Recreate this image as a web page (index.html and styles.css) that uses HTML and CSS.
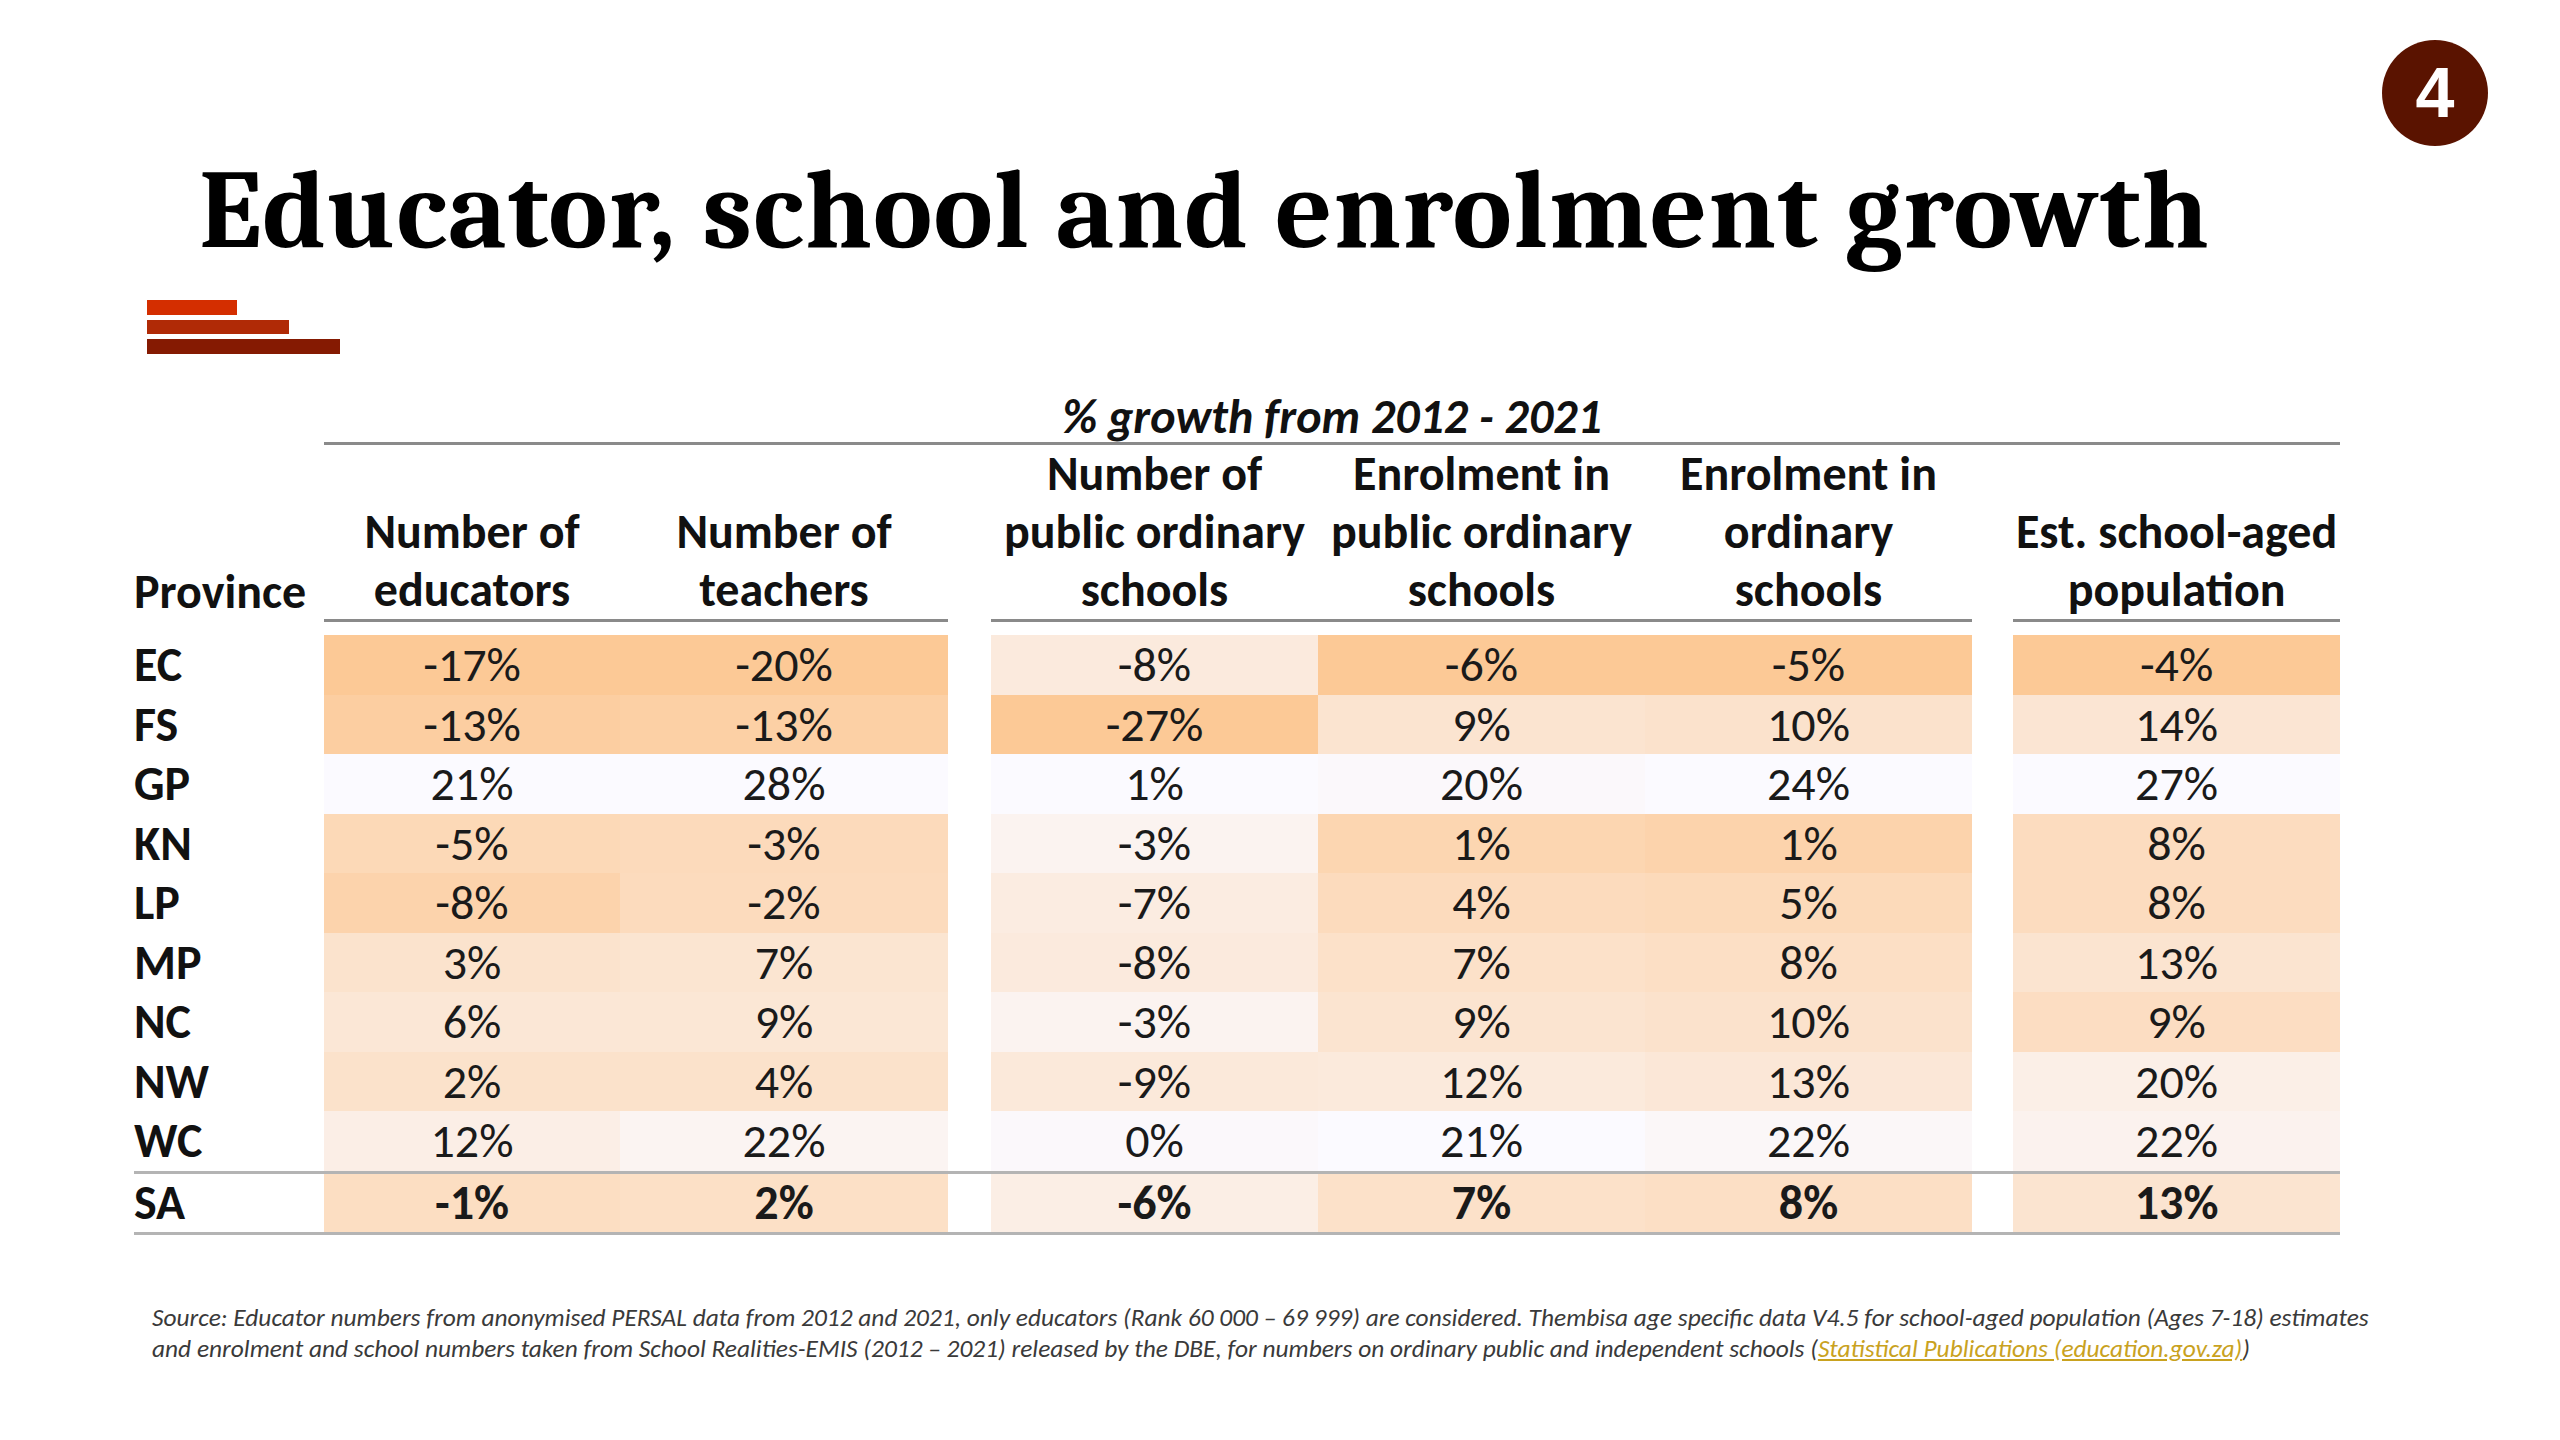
FILE: index.html
```html
<!DOCTYPE html>
<html lang="en">
<head>
<meta charset="utf-8">
<title>Educator, school and enrolment growth</title>
<link rel="stylesheet" href="styles.css">
</head>
<body>
<div class="slide">
  <div class="badge">4</div>
  <h1 class="title">Educator, school and enrolment growth</h1>
  <div class="bars">
    <div class="bar bar1"></div>
    <div class="bar bar2"></div>
    <div class="bar bar3"></div>
  </div>
  <table class="growth">
    <colgroup>
      <col class="c-prov"><col class="c-a1"><col class="c-a2"><col class="c-gap1"><col class="c-b"><col class="c-b"><col class="c-b"><col class="c-gap2"><col class="c-b">
    </colgroup>
    <thead>
      <tr class="cap-row">
        <th></th>
        <th colspan="8" class="caption">% growth from 2012 - 2021</th>
      </tr>
      <tr class="head-row">
        <th class="prov">Province</th>
        <th class="h">Number of<br>educators</th>
        <th class="h">Number of<br>teachers</th>
        <th class="gap"></th>
        <th class="h">Number of<br>public ordinary<br>schools</th>
        <th class="h">Enrolment in<br>public ordinary<br>schools</th>
        <th class="h">Enrolment in<br>ordinary<br>schools</th>
        <th class="gap"></th>
        <th class="h">Est. school-aged<br>population</th>
      </tr>
      <tr class="spacer"><td colspan="9"></td></tr>
    </thead>
    <tbody>
      <tr>
        <th class="prov">EC</th>
        <td style="background:rgb(252,201,150)">-17%</td>
        <td style="background:rgb(252,201,150)">-20%</td>
        <td class="gap"></td>
        <td style="background:rgb(251,234,221)">-8%</td>
        <td style="background:rgb(252,201,150)">-6%</td>
        <td style="background:rgb(252,201,150)">-5%</td>
        <td class="gap"></td>
        <td style="background:rgb(252,201,150)">-4%</td>
      </tr>
      <tr>
        <th class="prov">FS</th>
        <td style="background:rgb(252,206,161)">-13%</td>
        <td style="background:rgb(252,208,165)">-13%</td>
        <td class="gap"></td>
        <td style="background:rgb(252,201,150)">-27%</td>
        <td style="background:rgb(251,228,208)">9%</td>
        <td style="background:rgb(251,226,204)">10%</td>
        <td class="gap"></td>
        <td style="background:rgb(251,229,211)">14%</td>
      </tr>
      <tr>
        <th class="prov">GP</th>
        <td style="background:rgb(251,250,255)">21%</td>
        <td style="background:rgb(251,250,255)">28%</td>
        <td class="gap"></td>
        <td style="background:rgb(251,250,255)">1%</td>
        <td style="background:rgb(251,248,251)">20%</td>
        <td style="background:rgb(251,250,255)">24%</td>
        <td class="gap"></td>
        <td style="background:rgb(251,250,255)">27%</td>
      </tr>
      <tr>
        <th class="prov">KN</th>
        <td style="background:rgb(252,217,183)">-5%</td>
        <td style="background:rgb(252,218,187)">-3%</td>
        <td class="gap"></td>
        <td style="background:rgb(251,243,240)">-3%</td>
        <td style="background:rgb(252,214,177)">1%</td>
        <td style="background:rgb(252,211,172)">1%</td>
        <td class="gap"></td>
        <td style="background:rgb(252,220,191)">8%</td>
      </tr>
      <tr>
        <th class="prov">LP</th>
        <td style="background:rgb(252,211,172)">-8%</td>
        <td style="background:rgb(252,219,189)">-2%</td>
        <td class="gap"></td>
        <td style="background:rgb(251,236,225)">-7%</td>
        <td style="background:rgb(252,219,189)">4%</td>
        <td style="background:rgb(252,218,186)">5%</td>
        <td class="gap"></td>
        <td style="background:rgb(252,220,191)">8%</td>
      </tr>
      <tr>
        <th class="prov">MP</th>
        <td style="background:rgb(251,227,205)">3%</td>
        <td style="background:rgb(251,229,209)">7%</td>
        <td class="gap"></td>
        <td style="background:rgb(251,234,221)">-8%</td>
        <td style="background:rgb(252,225,201)">7%</td>
        <td style="background:rgb(252,223,197)">8%</td>
        <td class="gap"></td>
        <td style="background:rgb(251,228,208)">13%</td>
      </tr>
      <tr>
        <th class="prov">NC</th>
        <td style="background:rgb(251,231,214)">6%</td>
        <td style="background:rgb(251,231,213)">9%</td>
        <td class="gap"></td>
        <td style="background:rgb(251,243,240)">-3%</td>
        <td style="background:rgb(251,228,208)">9%</td>
        <td style="background:rgb(251,226,204)">10%</td>
        <td class="gap"></td>
        <td style="background:rgb(252,221,194)">9%</td>
      </tr>
      <tr>
        <th class="prov">NW</th>
        <td style="background:rgb(251,226,203)">2%</td>
        <td style="background:rgb(251,226,203)">4%</td>
        <td class="gap"></td>
        <td style="background:rgb(251,233,218)">-9%</td>
        <td style="background:rgb(251,234,220)">12%</td>
        <td style="background:rgb(251,231,215)">13%</td>
        <td class="gap"></td>
        <td style="background:rgb(251,239,231)">20%</td>
      </tr>
      <tr>
        <th class="prov">WC</th>
        <td style="background:rgb(251,238,230)">12%</td>
        <td style="background:rgb(251,244,242)">22%</td>
        <td class="gap"></td>
        <td style="background:rgb(251,248,251)">0%</td>
        <td style="background:rgb(251,250,255)">21%</td>
        <td style="background:rgb(251,247,248)">22%</td>
        <td class="gap"></td>
        <td style="background:rgb(251,242,238)">22%</td>
      </tr>
      <tr class="total">
        <th class="prov">SA</th>
        <td style="background:rgb(252,222,194)">-1%</td>
        <td style="background:rgb(252,224,198)">2%</td>
        <td class="gap"></td>
        <td style="background:rgb(251,238,229)">-6%</td>
        <td style="background:rgb(252,225,201)">7%</td>
        <td style="background:rgb(252,223,197)">8%</td>
        <td class="gap"></td>
        <td style="background:rgb(251,228,208)">13%</td>
      </tr>
    </tbody>
  </table>
  <p class="note">Source: Educator numbers from anonymised PERSAL data from 2012 and 2021, only educators (Rank 60&nbsp;000 – 69&nbsp;999) are considered. Thembisa age specific data V4.5 for school-aged population (Ages 7-18) estimates<br>and enrolment and school numbers taken from School Realities-EMIS (2012 – 2021) released by the DBE, for numbers on ordinary public and independent schools (<a class="link" href="#">Statistical Publications (education.gov.za)</a>)</p>
</div>
</body>
</html>
```

FILE: styles.css
```css
html, body {
  margin: 0;
  padding: 0;
  background: #ffffff;
}

.slide {
  position: relative;
  width: 2560px;
  height: 1440px;
  overflow: hidden;
  background: #ffffff;
  font-family: "Carlito", "Liberation Sans Narrow", "Liberation Sans", sans-serif;
  color: #111111;
}

.badge {
  position: absolute;
  left: 2382px;
  top: 40px;
  width: 106px;
  height: 106px;
  border-radius: 50%;
  background: #5a1300;
  color: #ffffff;
  font-family: "Liberation Sans", Arial, sans-serif;
  font-weight: 700;
  font-size: 70px;
  line-height: 106px;
  text-align: center;
}

.title {
  margin: 0;
  padding: 155px 0 0 199px;
  font-family: "Caladea", "Liberation Serif", serif;
  font-weight: 700;
  font-size: 112px;
  line-height: 112px;
  letter-spacing: 1.1px;
  color: #000000;
  white-space: nowrap;
}

.bars {
  display: flex;
  flex-direction: column;
  gap: 5px;
  margin: 33px 0 0 147px;
}

.bar { height: 15px; }
.bar1 { width: 90px; background: #d42e00; }
.bar2 { width: 142px; height: 14px; background: #b02a06; }
.bar3 { width: 193px; background: #851a02; }

.growth {
  margin: 38px 0 0 134px;
  border-collapse: collapse;
  table-layout: fixed;
  width: 2206px;
  font-size: 48px;
}

.c-prov { width: 190px; }
.c-a1 { width: 296px; }
.c-a2 { width: 328px; }
.c-gap1 { width: 43px; }
.c-b { width: 327px; }
.c-gap2 { width: 41px; }

.growth th,
.growth td {
  padding: 0;
  text-align: center;
  white-space: nowrap;
}

.caption {
  font-style: italic;
  font-weight: 700;
  font-size: 48px;
  line-height: 50px;
  border-bottom: 3px solid #8a8a8a;
}

.head-row th {
  vertical-align: bottom;
  font-weight: 700;
  line-height: 58px;
}

.head-row .h {
  border-bottom: 3px solid #8a8a8a;
}

.growth .prov {
  text-align: left;
  font-weight: 700;
}

.spacer td {
  height: 13px;
  line-height: 0;
}

.growth tbody tr {
  height: 59.5px;
}

.growth tbody td,
.growth tbody th {
  line-height: 59.5px;
  font-weight: 400;
  color: #1a1a1a;
}

.growth tbody th.prov {
  font-weight: 700;
  color: #111111;
}

.growth .total td,
.growth .total th {
  font-weight: 700;
  line-height: 58px;
  border-top: 3px solid #b4b4b4;
  border-bottom: 3px solid #b4b4b4;
}

.growth .total {
  height: 58px;
}

.note {
  margin: 67px 0 0 152px;
  font-style: italic;
  font-size: 25.4px;
  line-height: 31px;
  color: #3a3a3a;
  white-space: nowrap;
}

.link {
  color: #c9a21f;
  text-decoration: underline;
}
```
